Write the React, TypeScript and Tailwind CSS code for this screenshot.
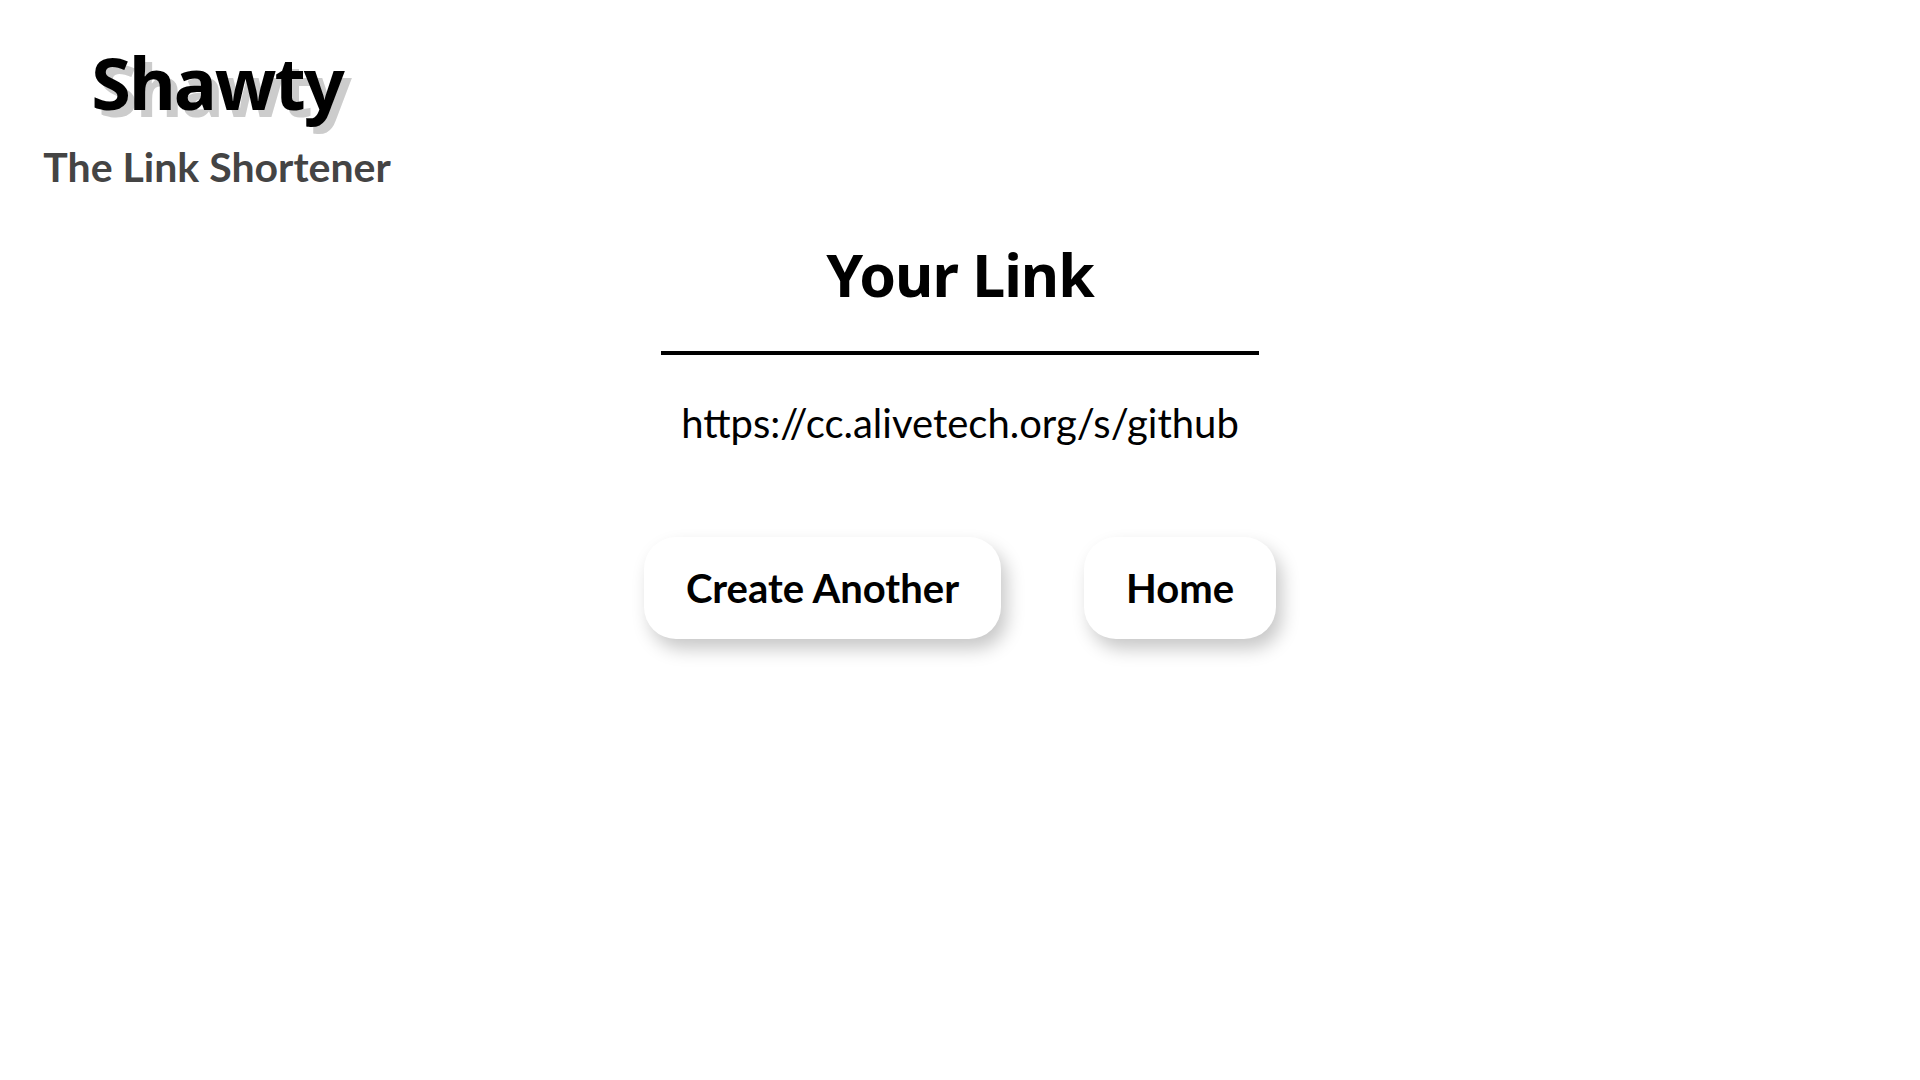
export default function App() {
  return (
    <div className="min-h-screen bg-white font-['Lato',sans-serif] text-black">
      <header className="flex w-[434px] flex-col items-center pt-[36px]">
        <h1 className="font-['Noto_Sans',sans-serif] text-[72px] font-bold leading-[92px] tracking-[-2px] [text-shadow:7px_7px_0_#cccccc]">
          Shawty
        </h1>
        <h2 className="mt-[15px] text-[41px] font-bold leading-[48px] text-[#444444]">The Link Shortener</h2>
      </header>

      <main className="flex flex-col items-center">
        <h1 className="mt-[43px] font-['Noto_Sans',sans-serif] text-[59px] font-bold leading-[80px] tracking-[-1px]">
          Your Link
        </h1>
        <div className="mt-[37px] h-[4px] w-[598px] bg-black" />
        <p className="mt-[44px] text-[40px] leading-[48px]">https://cc.alivetech.org/s/github</p>

        <div className="mt-[90px] flex gap-[83px]">
          <button className="h-[102px] rounded-[32px] bg-white px-[42px] text-[40px] font-bold shadow-[6px_10px_18px_rgba(0,0,0,0.22)]">
            Create Another
          </button>
          <button className="h-[102px] rounded-[32px] bg-white px-[42px] text-[40px] font-bold shadow-[6px_10px_18px_rgba(0,0,0,0.22)]">
            Home
          </button>
        </div>
      </main>
    </div>
  );
}
